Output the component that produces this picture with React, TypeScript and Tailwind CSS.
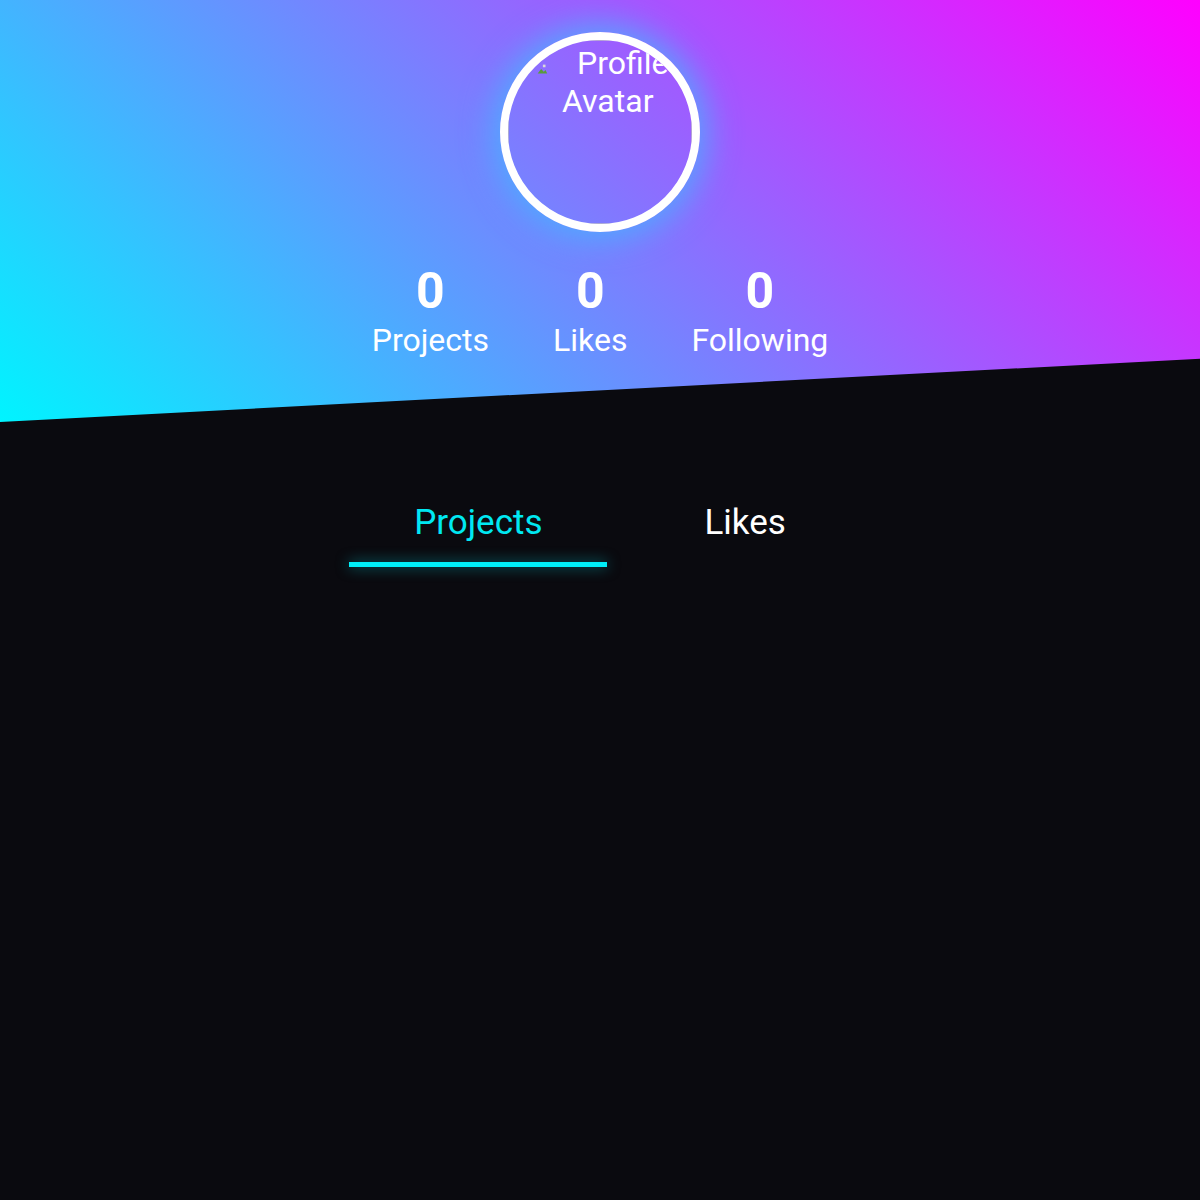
import React, { useState } from 'react';

type Stat = { value: number; label: string };

const stats: Stat[] = [
  { value: 0, label: 'Projects' },
  { value: 0, label: 'Likes' },
  { value: 0, label: 'Following' },
];

const tabs = ['Projects', 'Likes'];

// Placeholder glyph shown where the avatar image failed to load
function BrokenImageIcon() {
  return (
    <svg width="14" height="14" viewBox="0 0 16 16" className="shrink-0">
      <path d="M3 13 L7 8 L10 11 L12 9 L14 13 Z" fill="#5a9b3c" />
      <rect x="9" y="3" width="3" height="3" fill="#d9d9d9" />
    </svg>
  );
}

function Avatar() {
  return (
    <div className="w-[200px] h-[200px] rounded-full border-[8px] border-white overflow-hidden shadow-[0_0_32px_8px_rgba(60,190,255,0.7)]">
      <div className="w-full h-full border border-[#bfbfbf]/70 pt-[3px] text-[32px] leading-[38px] text-white">
        <div className="flex items-center whitespace-nowrap">
          <span className="ml-[26px] mt-[18px] self-start">
            <BrokenImageIcon />
          </span>
          <span className="ml-[28px]">Profile</span>
        </div>
        <div className="pl-[53px]">Avatar</div>
      </div>
    </div>
  );
}

export default function App() {
  const [active, setActive] = useState('Projects');

  return (
    <div
      className="min-h-[1200px] bg-[#0a0a0f] text-white"
      style={{ fontFamily: 'Roboto, "Noto Sans", sans-serif' }}
    >
      <header className="h-[422px] bg-[linear-gradient(45deg,#00f4ff,#ff00ff)] [clip-path:polygon(0_0,100%_0,100%_85%,0_100%)] flex flex-col items-center pt-[32px]">
        <Avatar />
        <div className="flex gap-[64px] mt-[30px]">
          {stats.map((s) => (
            <div key={s.label} className="flex flex-col items-center">
              <span className="text-[50px] font-bold leading-[58px]">{s.value}</span>
              <span className="text-[32px] leading-[40px]">{s.label}</span>
            </div>
          ))}
        </div>
      </header>

      <nav className="flex justify-center gap-[32px] mt-[80px]">
        {tabs.map((t) => {
          const on = t === active;
          return (
            <button key={t} onClick={() => setActive(t)} className="flex flex-col">
              <span
                className={`px-[65px] text-[35px] leading-[41px] ${on ? 'text-[#00e8f2]' : 'text-white'}`}
              >
                {t}
              </span>
              <span
                className={`mt-[19px] h-[5px] w-full ${
                  on ? 'bg-[#00eef8] shadow-[0_0_14px_rgba(0,238,248,0.5)]' : 'bg-transparent'
                }`}
              />
            </button>
          );
        })}
      </nav>
    </div>
  );
}
